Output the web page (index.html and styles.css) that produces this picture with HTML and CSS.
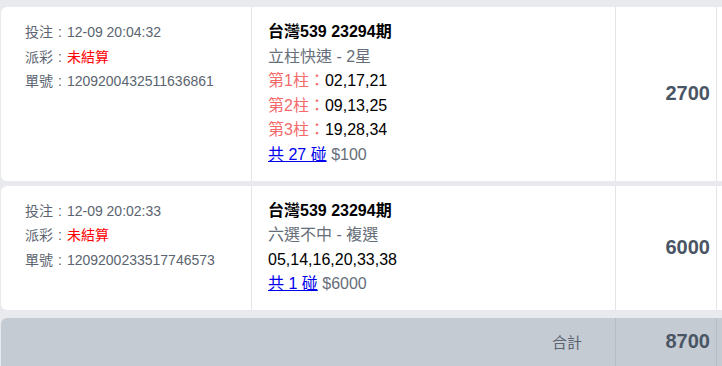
FILE: index.html
```html
<!DOCTYPE html>
<html lang="zh-Hant">
<head>
<meta charset="utf-8">
<link rel="stylesheet" href="styles.css">
</head>
<body>
<div class="list">
  <div class="row">
    <div class="cell info">
      <div class="line"><span class="label">投注</span><span class="sep">:</span>12-09 20:04:32</div>
      <div class="line"><span class="label">派彩</span><span class="sep">:</span><span class="red">未結算</span></div>
      <div class="line"><span class="label">單號</span><span class="sep">:</span>1209200432511636861</div>
    </div>
    <div class="cell detail">
      <div class="line title">台灣539 23294期</div>
      <div class="line sub">立柱快速 - 2星</div>
      <div class="line"><span class="pink">第1柱：</span>02,17,21</div>
      <div class="line"><span class="pink">第2柱：</span>09,13,25</div>
      <div class="line"><span class="pink">第3柱：</span>19,28,34</div>
      <div class="line"><a class="link" href="#">共 27 碰</a> <span class="sub">$100</span></div>
    </div>
    <div class="cell amount">2700</div>
    <div class="cell extra"></div>
  </div>
  <div class="row">
    <div class="cell info">
      <div class="line"><span class="label">投注</span><span class="sep">:</span>12-09 20:02:33</div>
      <div class="line"><span class="label">派彩</span><span class="sep">:</span><span class="red">未結算</span></div>
      <div class="line"><span class="label">單號</span><span class="sep">:</span>1209200233517746573</div>
    </div>
    <div class="cell detail">
      <div class="line title">台灣539 23294期</div>
      <div class="line sub">六選不中 - 複選</div>
      <div class="line">05,14,16,20,33,38</div>
      <div class="line"><a class="link" href="#">共 1 碰</a> <span class="sub">$6000</span></div>
    </div>
    <div class="cell amount">6000</div>
    <div class="cell extra"></div>
  </div>
  <div class="row total">
    <div class="cell total-label">合計</div>
    <div class="cell amount">8700</div>
    <div class="cell extra"></div>
  </div>
</div>
</body>
</html>
```
FILE: styles.css
```css
* { box-sizing: border-box; }
html, body { margin: 0; padding: 0; }
body {
  background: #e8eaee;
  font-family: "Liberation Sans", "Noto Sans CJK TC", sans-serif;
  overflow: hidden;
}
.list {
  display: flex;
  flex-direction: column;
  gap: 5px;
  padding: 7px 0 0 1px;
  width: 722px;
}
.row {
  display: flex;
  background: #fff;
  border-radius: 6px 0 0 6px;
}
.cell {
  border-right: 1px solid #e2e4e8;
}
.info {
  width: 251px;
  padding: 13px 0 13px 24px;
  font-size: 14px;
  color: #5b6470;
}
.sep { padding: 0 5px; }
.line {
  line-height: 24.6px;
  white-space: nowrap;
}
.red { color: #ff0000; }
.detail {
  width: 364px;
  padding: 13px 0 13px 16px;
  font-size: 16px;
  color: #000;
}
.title { font-weight: bold; }
.sub { color: #666e79; }
.pink { color: #f46a6a; }
.link { color: #0000ee; text-decoration: underline; }
.amount {
  width: 101px;
  display: flex;
  align-items: center;
  justify-content: flex-end;
  padding-right: 6px;
  font-size: 20px;
  font-weight: bold;
  color: #4a5564;
}
.extra {
  flex: 1;
  border-right: none;
}
.row.total {
  margin-top: 3px;
  height: 48px;
  background: #c4cbd3;
  border-radius: 6px 0 0 0;
}
.total .cell { border-right-color: #b5bcc5; }
.total-label {
  width: 615px;
  display: flex;
  align-items: center;
  justify-content: flex-end;
  padding-right: 33px;
  font-size: 15px;
  color: #5b6470;
}
.total .extra { border-right: none; }
```
